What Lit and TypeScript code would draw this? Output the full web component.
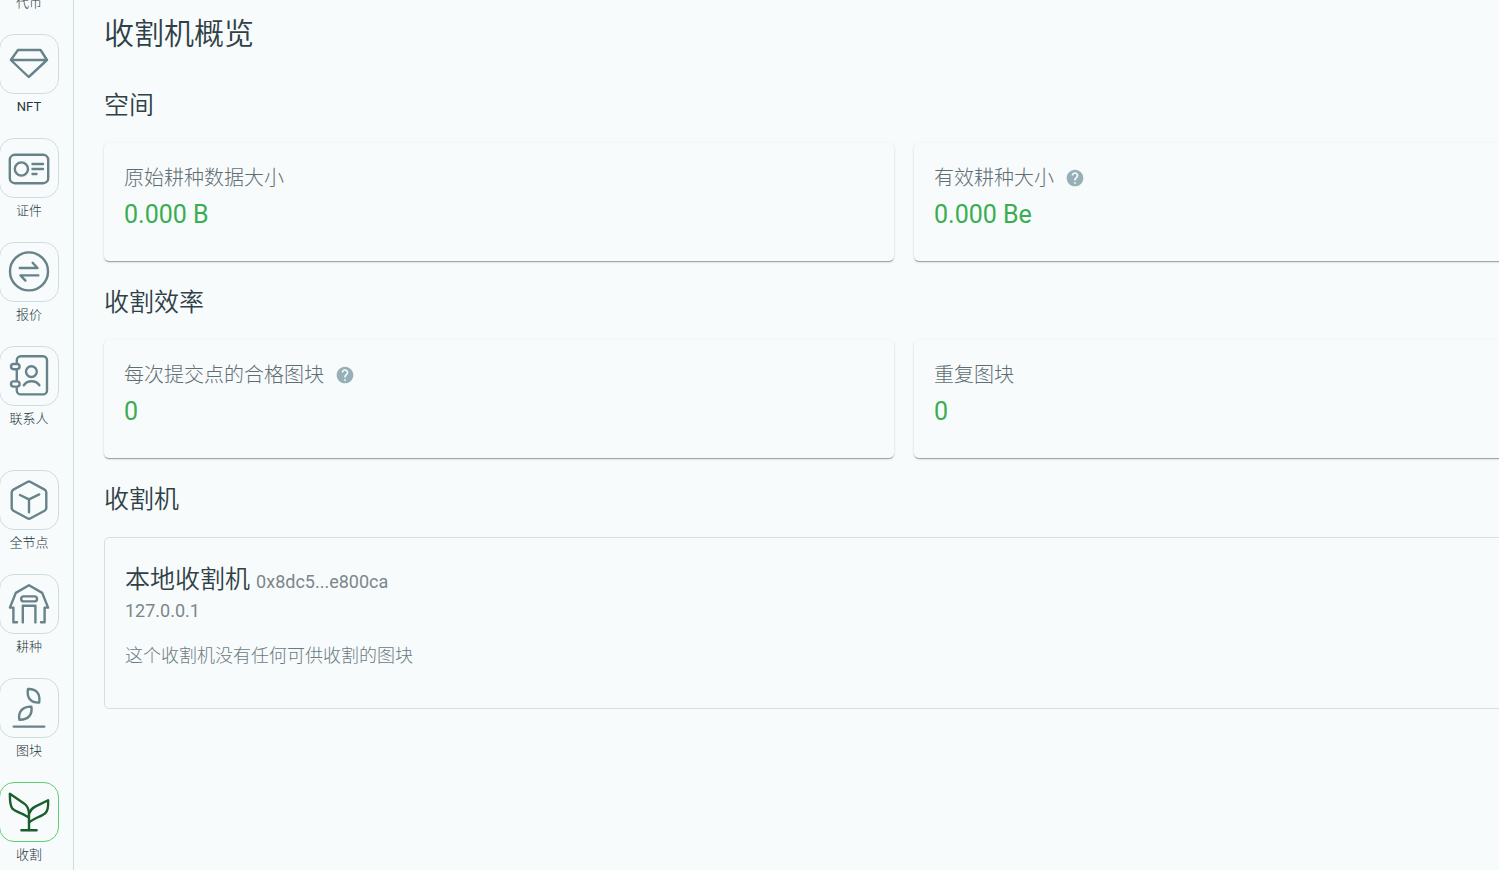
import { LitElement, html, svg, css, nothing, type TemplateResult } from "lit";
import { customElement, property } from "lit/decorators.js";

const icons: Record<string, TemplateResult> = {
  tokens: svg`<circle cx="30" cy="30" r="19"/><circle cx="30" cy="30" r="8"/>`,
  nft: svg`<path d="M19 16H41.6L48 26L29.7 43L11.8 26Z M12 26H48"/>`,
  credentials: svg`
    <rect x="10.8" y="16.8" width="38.4" height="28.4" rx="5"/>
    <circle cx="22.4" cy="31" r="6.6"/>
    <path d="M33.5 26H44M33.5 31H44M33.5 36H37.5"/>`,
  offers: svg`
    <circle cx="30" cy="29.4" r="19"/>
    <path d="M20.8 26H38.5L33.6 20.8M39.3 33.4H21.5L26.4 38.6"/>`,
  contacts: svg`
    <path d="M17.8 16.9V14.3A4 4 0 0 1 21.8 10.3H44A4 4 0 0 1 48 14.3V44.4A4 4 0 0 1 44 48.4H21.8A4 4 0 0 1 17.8 44.4V41.6M17.8 23.9V34.4"/>
    <rect x="12" y="18" width="8.6" height="5.2" rx="2.6"/>
    <rect x="12" y="35.4" width="8.6" height="5.2" rx="2.6"/>
    <circle cx="32.4" cy="25.6" r="5.4"/>
    <path d="M24.8 39.2C28.5 34 36.7 34 40.4 39.2"/>`,
  node: svg`
    <path d="M28.4 12Q30 11.1 31.6 12L45.6 19.6Q47.3 20.6 47.3 22.5V37.8Q47.3 39.7 45.6 40.7L31.6 48.3Q30 49.2 28.4 48.3L14.4 40.7Q12.7 39.7 12.7 37.8V22.5Q12.7 20.6 14.4 19.6Z"/>
    <path d="M21 25L30 29.4L40.2 24.4M30 29.4V42.2"/>`,
  farm: svg`
    <path d="M18 48.2H14.4V33.6H10.9L16.8 18.9L30 11.3L43.2 18.9L49.1 33.6H45.6V48.2H42"/>
    <rect x="22.2" y="22.4" width="15.8" height="5" rx="2.5"/>
    <path d="M23.8 48.4V31.8H36.4V48.4"/>`,
  plots: svg`
    <path d="M29 11C37 10.6 41.6 15.4 40.2 24.6C31.8 24.8 27.4 19.8 29 11Z"/>
    <path d="M32.4 28.6C24.2 28.2 18.8 33.4 20.4 41.8C29 42 33.6 37 32.4 28.6Z"/>
    <path d="M14.8 48.6H45.2"/>`,
  harvest: svg`
    <path d="M30 48V30.8C29.6 26.6 28.6 24 25 21.4L10.9 11.8C10.9 17.6 10.6 23.4 13.4 26.6C17.6 30.4 25.6 31.8 30 35.8"/>
    <path d="M30 31.6C31.4 28 33 26.2 36.2 24.6L49.1 18.2C49.3 23 49.6 28 46.6 30.8C42.2 34.8 34.6 36 30 40.6M22.4 48.2H37.6"/>`,
};

@customElement("nav-item")
class NavItem extends LitElement {
  @property() icon = "";
  @property() label = "";
  @property({ type: Boolean }) active = false;

  static styles = css`
    :host {
      display: block;
      width: 60px;
      flex: none;
    }
    .link {
      display: flex;
      flex-direction: column;
      gap: 5px;
      color: #24363b;
      text-decoration: none;
    }
    .tile {
      display: block;
      box-sizing: border-box;
      height: 60px;
      border: 1px solid #ccdde1;
      border-radius: 15px;
      color: #678389;
    }
    .glyph {
      display: block;
      fill: none;
      stroke: currentColor;
      stroke-width: 2.4;
      stroke-linecap: round;
      stroke-linejoin: round;
    }
    .active .tile {
      border-color: #5ece71;
      color: #1c5e2b;
    }
    .label {
      font-size: 13px;
      line-height: 16px;
      text-align: center;
      white-space: nowrap;
    }
    .latin {
      font-weight: 400;
    }
  `;

  render() {
    const latin = /^[A-Za-z]+$/.test(this.label);
    return html`
      <a
        class="link ${this.active ? "active" : ""}"
        href="#${this.icon}"
        aria-current=${this.active ? "page" : nothing}
      >
        <span class="tile">
          <svg class="glyph" viewBox="1 1 58 58" aria-hidden="true">${icons[this.icon]}</svg>
        </span>
        <span class="label ${latin ? "latin" : ""}">${this.label}</span>
      </a>
    `;
  }
}

@customElement("stat-card")
class StatCard extends LitElement {
  @property() label = "";
  @property() value = "";
  @property({ type: Boolean }) help = false;

  static styles = css`
    :host {
      display: block;
      padding: 20px 20px 24px;
      border-radius: 5px;
      background: #f8fbfc;
      box-shadow:
        0 2px 1px -1px rgba(0, 0, 0, 0.2),
        0 1px 1px 0 rgba(0, 0, 0, 0.14),
        0 1px 3px 0 rgba(0, 0, 0, 0.12);
    }
    .label {
      display: flex;
      align-items: center;
      gap: 11px;
      font-size: 20px;
      line-height: 30px;
      color: #5f6e73;
    }
    .help {
      width: 20px;
      height: 20px;
      fill: #97afb6;
    }
    .value {
      font-size: 25px;
      line-height: 44px;
      font-weight: 400;
      color: #3aad52;
    }
  `;

  render() {
    return html`
      <div class="label">
        <span>${this.label}</span>
        ${this.help
          ? html`<svg class="help" viewBox="0 0 24 24" role="img" aria-label="?">
              <path d="M12 2C6.48 2 2 6.48 2 12s4.48 10 10 10 10-4.48 10-10S17.52 2 12 2zm1 17h-2v-2h2v2zm2.07-7.75-.9.92C13.45 12.9 13 13.5 13 15h-2v-.5c0-1.1.45-2.1 1.17-2.83l1.24-1.26c.37-.36.59-.86.59-1.41 0-1.1-.9-2-2-2s-2 .9-2 2H8c0-2.21 1.79-4 4-4s4 1.79 4 4c0 .88-.36 1.68-.93 2.25z"/>
            </svg>`
          : nothing}
      </div>
      <div class="value">${this.value}</div>
    `;
  }
}

@customElement("app-root")
class AppRoot extends LitElement {
  static styles = css`
    :host {
      display: flex;
      height: 100vh;
      overflow: hidden;
      background: #f8fbfc;
      color: #2f4146;
      font-family: Roboto, "Noto Sans CJK SC", sans-serif;
      font-weight: 300;
    }
    .nav {
      display: flex;
      flex: none;
      flex-direction: column;
      justify-content: flex-end;
      align-items: flex-end;
      gap: 43px;
      box-sizing: border-box;
      width: 74px;
      padding: 0 14px 7px 0;
      border-right: 1px solid #ccdde1;
      overflow: hidden;
    }
    .group {
      display: flex;
      flex: none;
      flex-direction: column;
      gap: 23px;
    }
    .main {
      flex: 1;
      min-width: 0;
      padding: 13px 0 0 30px;
      overflow: hidden;
    }
    .page {
      display: flex;
      flex-direction: column;
      gap: 36px;
      min-width: 1600px;
    }
    .title,
    .heading,
    .name {
      margin: 0;
      font-weight: 350;
    }
    .host,
    .note {
      margin: 0;
    }
    .title {
      font-size: 30px;
      line-height: 42px;
    }
    .sections {
      display: flex;
      flex-direction: column;
      gap: 27px;
    }
    .section {
      display: flex;
      flex-direction: column;
      gap: 22px;
    }
    .heading {
      font-size: 25px;
      line-height: 30px;
    }
    .cards {
      display: grid;
      grid-template-columns: 1fr 1fr;
      gap: 20px;
    }
    .harvester {
      padding: 22px 20px 36px;
      border: 1px solid #d7dee0;
      border-radius: 5px;
    }
    .name {
      font-size: 25px;
      line-height: 40px;
    }
    .id,
    .host,
    .note {
      font-size: 18px;
      color: #6b7a7f;
    }
    .id,
    .host {
      font-weight: 400;
      color: #7a878b;
    }
    .host {
      line-height: 18px;
    }
    .note {
      margin-top: 20px;
      line-height: 32px;
    }
  `;

  render() {
    return html`
      <nav class="nav">
        <div class="group">
          <nav-item icon="tokens" label="代币"></nav-item>
          <nav-item icon="nft" label="NFT"></nav-item>
          <nav-item icon="credentials" label="证件"></nav-item>
          <nav-item icon="offers" label="报价"></nav-item>
          <nav-item icon="contacts" label="联系人"></nav-item>
        </div>
        <div class="group">
          <nav-item icon="node" label="全节点"></nav-item>
          <nav-item icon="farm" label="耕种"></nav-item>
          <nav-item icon="plots" label="图块"></nav-item>
          <nav-item icon="harvest" label="收割" active></nav-item>
        </div>
      </nav>
      <main class="main">
        <div class="page">
          <h1 class="title">收割机概览</h1>
          <div class="sections">
            <section class="section">
              <h2 class="heading">空间</h2>
              <div class="cards">
                <stat-card label="原始耕种数据大小" value="0.000 B"></stat-card>
                <stat-card label="有效耕种大小" value="0.000 Be" help></stat-card>
              </div>
            </section>
            <section class="section">
              <h2 class="heading">收割效率</h2>
              <div class="cards">
                <stat-card label="每次提交点的合格图块" value="0" help></stat-card>
                <stat-card label="重复图块" value="0"></stat-card>
              </div>
            </section>
            <section class="section">
              <h2 class="heading">收割机</h2>
              <div class="harvester">
                <h3 class="name">本地收割机 <span class="id">0x8dc5...e800ca</span></h3>
                <p class="host">127.0.0.1</p>
                <p class="note">这个收割机没有任何可供收割的图块</p>
              </div>
            </section>
          </div>
        </div>
      </main>
    `;
  }
}
